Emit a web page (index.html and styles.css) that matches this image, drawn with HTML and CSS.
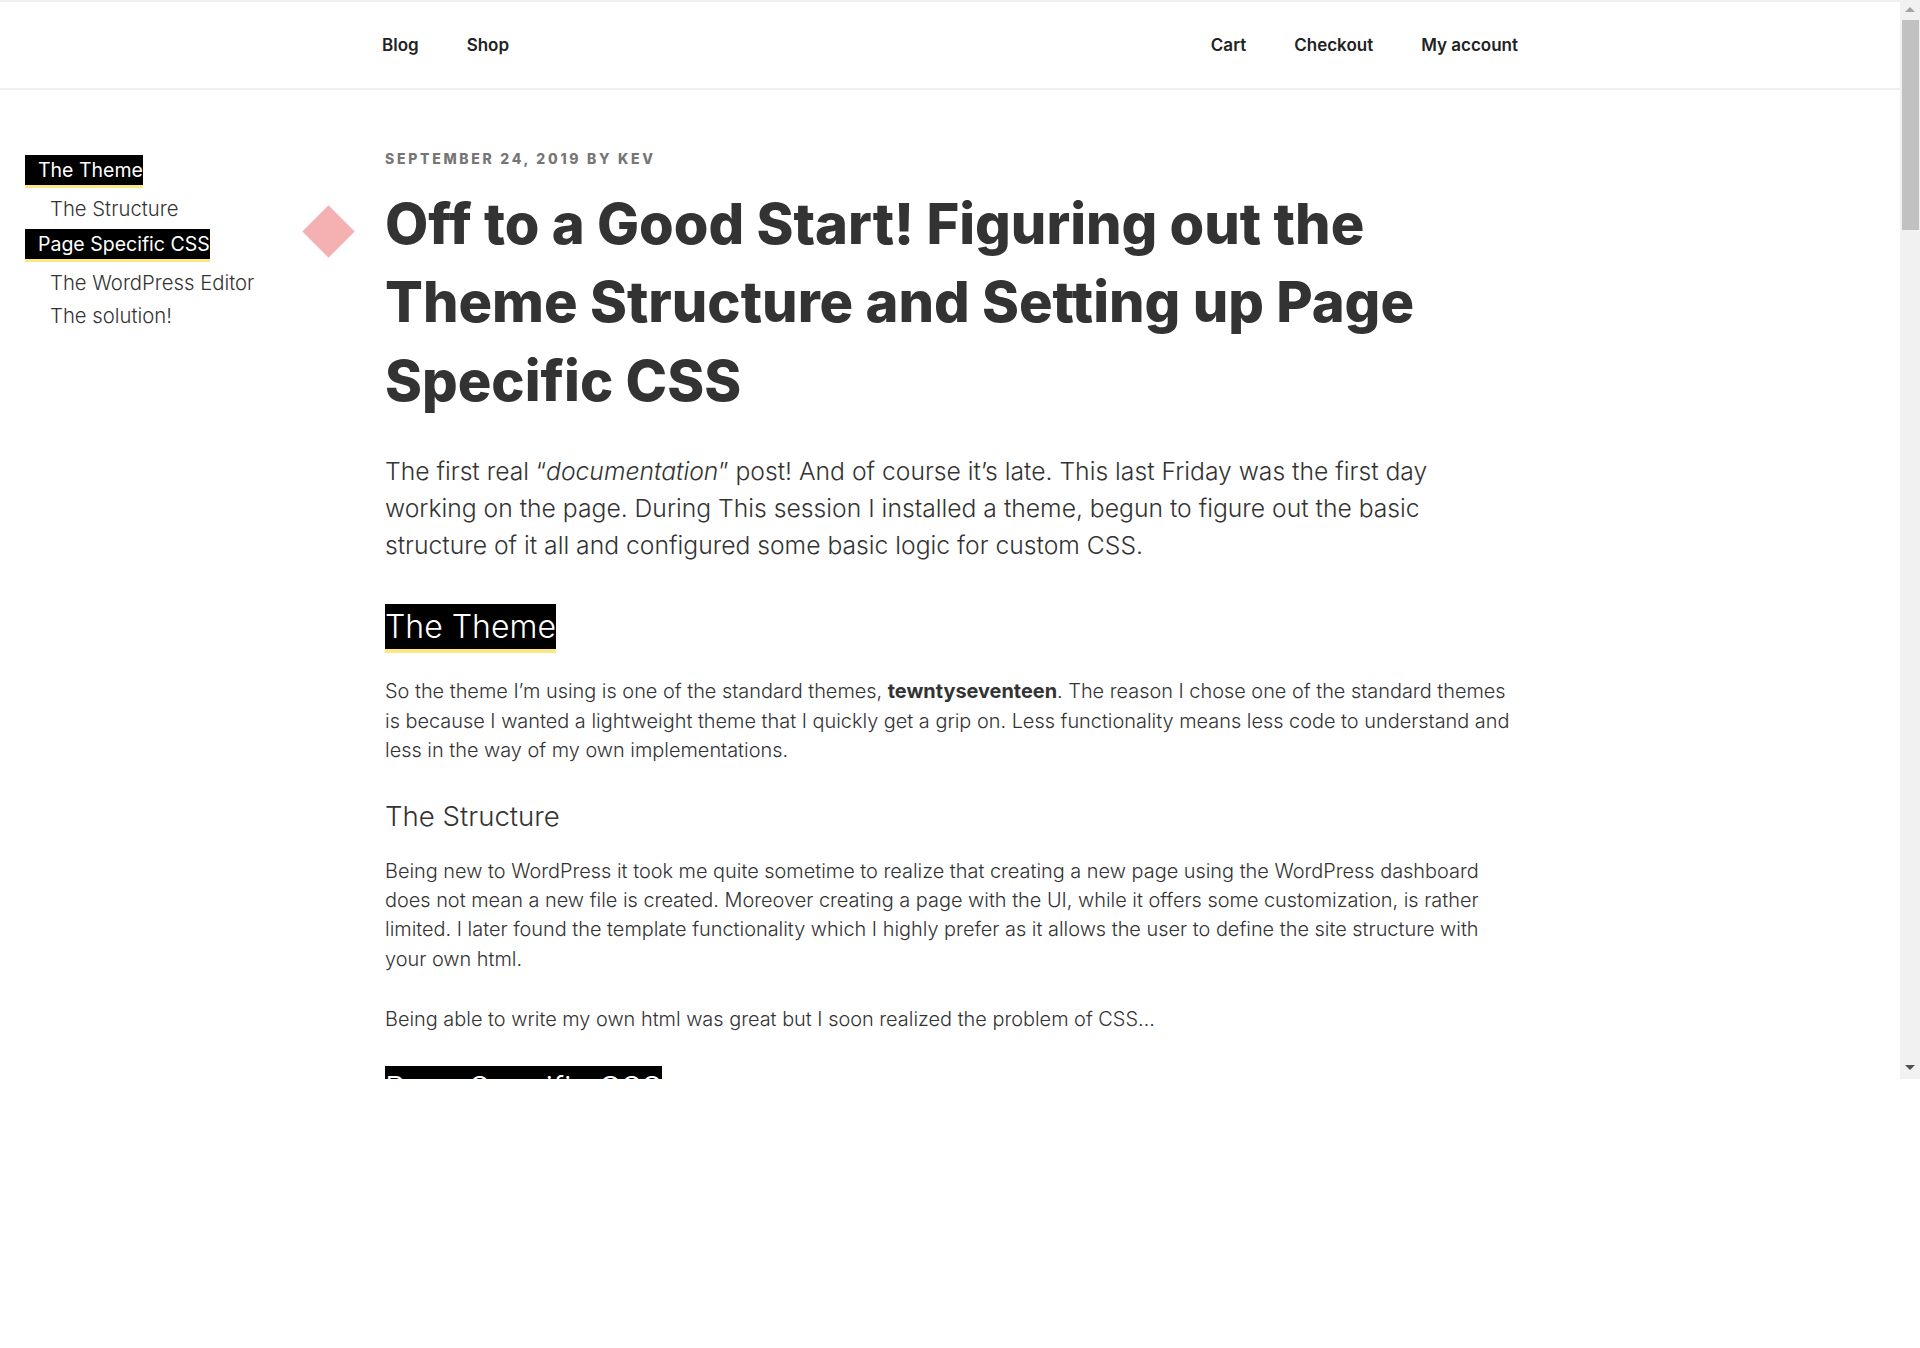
FILE: index.html
```html
<!DOCTYPE html>
<html lang="en">
<head>
<meta charset="utf-8">
<title>Off to a Good Start!</title>
<link rel="stylesheet" href="styles.css">
</head>
<body>
<div class="screen">
  <div class="page">
    <header class="site-header">
      <nav class="nav-wrap">
        <ul class="menu">
          <li><a href="#">Blog</a></li>
          <li><a href="#">Shop</a></li>
        </ul>
        <ul class="menu">
          <li><a href="#">Cart</a></li>
          <li><a href="#">Checkout</a></li>
          <li><a href="#">My account</a></li>
        </ul>
      </nav>
    </header>
    <div class="layout">
      <aside class="toc">
        <a class="toc-h2" href="#">The Theme</a>
        <a class="toc-h3" href="#">The Structure</a>
        <a class="toc-h2" href="#">Page Specific CSS</a>
        <a class="toc-h3" href="#">The WordPress Editor</a>
        <a class="toc-h3" href="#">The solution!</a>
      </aside>
      <article class="post">
        <span class="diamond"></span>
        <div class="entry-meta">September 24, 2019 by Kev</div>
        <h1 class="entry-title">Off to a Good Start! Figuring out the Theme Structure and Setting up Page Specific CSS</h1>
        <p class="intro">The first real “<em>documentation</em>” post! And of course it’s late. This last Friday was the first day working on the page. During This session I installed a theme, begun to figure out the basic structure of it all and configured some basic logic for custom CSS.</p>
        <h2 class="hl">The Theme</h2>
        <p class="text">So the theme I’m using is one of the standard themes, <strong>tewntyseventeen</strong>. The reason I chose one of the standard themes is because I wanted a lightweight theme that I quickly get a grip on. Less functionality means less code to understand and less in the way of my own implementations.</p>
        <h3 class="sub">The Structure</h3>
        <p class="text">Being new to WordPress it took me quite sometime to realize that creating a new page using the WordPress dashboard does not mean a new file is created. Moreover creating a page with the UI, while it offers some customization, is rather limited. I later found the template functionality which I highly prefer as it allows the user to define the site structure with your own html.</p>
        <p class="text">Being able to write my own html was great but I soon realized the problem of CSS…</p>
        <h2 class="hl">Page Specific CSS</h2>
      </article>
    </div>
  </div>
  <div class="scrollbar">
    <span class="sb-arrow sb-up"></span>
    <span class="sb-thumb"></span>
    <span class="sb-fill"></span>
    <span class="sb-arrow sb-down"></span>
  </div>
</div>
</body>
</html>
```
FILE: styles.css
```css
* { box-sizing: border-box; }
html, body { margin: 0; padding: 0; background: #fff; }
body { font-family: Inter, "Noto Sans", sans-serif; color: #333; }
a { text-decoration: none; color: inherit; }

.screen { display: flex; height: 1079px; overflow: hidden; }
.page { flex: 1; min-width: 0; position: relative; }

/* header / top navigation */
.site-header {
  height: 90px;
  border-top: 2px solid #efefef;
  border-bottom: 2px solid #efefef;
  display: flex;
  align-items: center;
}
.nav-wrap {
  width: 1136px;
  margin: 0 auto;
  display: flex;
  justify-content: space-between;
}
.menu { list-style: none; margin: 0; padding: 0; display: flex; gap: 48px; }
.menu a { font-size: 17px; font-weight: 600; color: #222; line-height: 24px; }

/* page layout */
.layout {
  display: grid;
  grid-template-columns: 1fr 1130px 1fr;
}

/* table of contents */
.toc {
  padding: 65px 0 0 25px;
  display: flex;
  flex-direction: column;
  align-items: flex-start;
}
.toc-h2 {
  background: #000;
  color: #fff;
  font-size: 19.5px;
  font-weight: 400;
  line-height: 30px;
  padding-left: 13px;
  border-bottom: 3px solid #fce883;
  margin: 4px 0;
}
.toc-h2:first-child { margin-top: 0; }
.toc-h3 {
  font-size: 20.3px;
  font-weight: 300;
  line-height: 33px;
  padding-left: 25px;
  color: #333;
}

/* article */
.post { position: relative; padding-top: 59px; }
.diamond {
  position: absolute;
  left: -75px;
  top: 123px;
  width: 37px;
  height: 37px;
  background: #f5b1b1;
  transform: rotate(45deg);
}
.entry-meta {
  font-size: 14px;
  font-weight: 800;
  letter-spacing: 2.7px;
  text-transform: uppercase;
  color: #767676;
  line-height: 20px;
}
.entry-title {
  margin: 16px 0 0;
  font-size: 56px;
  line-height: 78.4px;
  font-weight: 800;
  color: #333;
}
.intro {
  margin: 33px 0 0;
  font-size: 24.7px;
  line-height: 36.7px;
  font-weight: 300;
}
.hl {
  width: fit-content;
  margin: 41px 0 0;
  background: #000;
  color: #fff;
  font-size: 32px;
  font-weight: 300;
  line-height: 45px;
  border-bottom: 4px solid #fce883;
}
.text {
  margin: 24px 0 0;
  font-size: 19.9px;
  line-height: 29.4px;
  font-weight: 300;
}
.text + .text { margin-top: 31px; }
.text strong { font-weight: 700; }
.sub {
  margin: 33px 0 0;
  font-size: 27.6px;
  line-height: 34px;
  font-weight: 300;
}
.sub + .text { margin-top: 24px; }
.text + .hl { margin-top: 31px; }

/* scrollbar */
.scrollbar {
  width: 20px;
  background: #f1f1f1;
  display: flex;
  flex-direction: column;
  align-items: center;
}
.sb-arrow { width: 0; height: 0; border-left: 5px solid transparent; border-right: 5px solid transparent; }
.sb-up { margin-top: 7px; border-bottom: 5px solid #a3a3a3; }
.sb-thumb { width: 17px; height: 210px; background: #c1c1c1; margin-top: 8px; }
.sb-fill { flex: 1; }
.sb-down { margin-bottom: 9px; border-top: 5px solid #505050; }
```
